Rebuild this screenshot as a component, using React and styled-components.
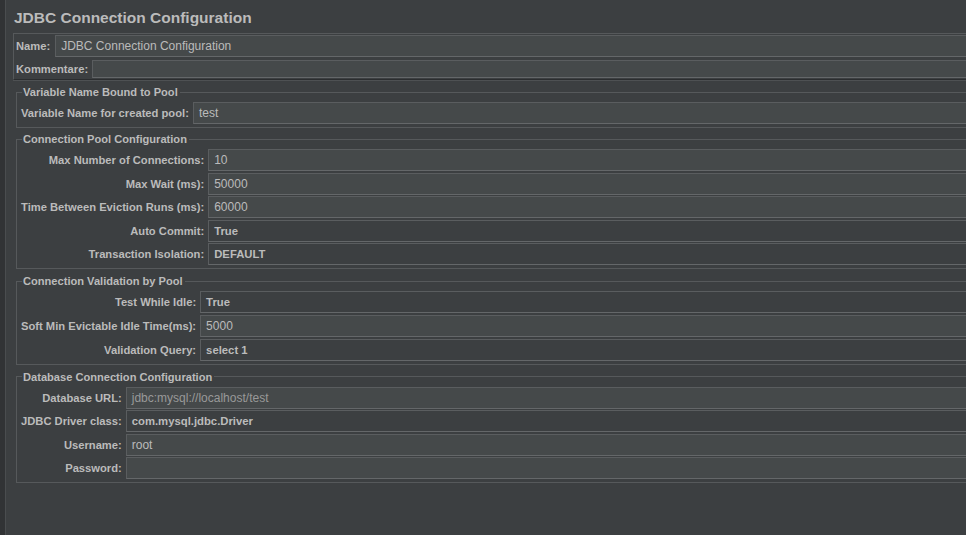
import React from "react";
import styled, { createGlobalStyle } from "styled-components";

const Global = createGlobalStyle`
  html, body { margin: 0; padding: 0; background: #3c3f41; }
  body { overflow: hidden; font-family: "Liberation Sans", Arial, sans-serif; }
  * { box-sizing: border-box; }
`;

const Screen = styled.div`
  width: 966px;
  height: 535px;
  display: flex;
  overflow: hidden;
  background: #3c3f41;
`;

const SideStrip = styled.div`
  width: 6px;
  flex: none;
  background: #313335;
  border-right: 1px solid #4a4d4f;
`;

const Main = styled.div`
  flex: none;
  width: 1000px;
  padding-left: 7px;
  display: flex;
  flex-direction: column;
`;

const Title = styled.h1`
  margin: 0;
  height: 33px;
  padding-left: 1px;
  font-size: 15.5px;
  font-weight: bold;
  line-height: 36px;
  color: #bbbbbb;
`;

const NamePanel = styled.div`
  border: 1px solid #56595b;
  border-bottom-color: #2b2d2f;
  box-shadow: 0 1px 0 #4e5153;
  padding: 1px 0 1px 2px;
  display: flex;
  flex-direction: column;
  gap: 3px;
`;

const NameRow = styled.div`
  display: flex;
  align-items: center;
  gap: ${(p) => p.$gap || 4}px;
`;

const Label = styled.label`
  font-size: 11.2px;
  font-weight: bold;
  color: #bbbbbb;
  text-align: right;
  white-space: nowrap;
`;

const Field = styled.div`
  flex: 1;
  height: ${(p) => p.$h || 22}px;
  padding-left: 5px;
  display: flex;
  align-items: center;
  font-size: ${(p) => (p.$combo ? 11.3 : 12)}px;
  white-space: nowrap;
  font-weight: ${(p) => (p.$combo ? "bold" : "normal")};
  color: ${(p) => p.$color || "#bbbbbb"};
  background: ${(p) => (p.$combo ? "#3c3f41" : "#45494a")};
  border: 1px solid #5a5d5f;
  border-bottom-color: #646769;
  border-right: none;
`;

const Group = styled.fieldset`
  margin: ${(p) => p.$mt}px 0 0 3px;
  padding: 3px 0 3px 4px;
  border: 1px solid #56595b;
  border-right: none;
  display: grid;
  grid-template-columns: max-content 1fr;
  column-gap: 4px;
  row-gap: 1.6px;
  align-items: center;
`;

const Legend = styled.legend`
  margin-left: 1px;
  padding: 0 2px 0 1px;
  font-size: 11.1px;
  font-weight: bold;
  line-height: 14px;
  color: #bbbbbb;
`;

const groups = [
  {
    title: "Variable Name Bound to Pool",
    mt: 5,
    rows: [["Variable Name for created pool:", "test"]],
  },
  {
    title: "Connection Pool Configuration",
    mt: 4,
    rows: [
      ["Max Number of Connections:", "10"],
      ["Max Wait (ms):", "50000"],
      ["Time Between Eviction Runs (ms):", "60000"],
      ["Auto Commit:", "True", true],
      ["Transaction Isolation:", "DEFAULT", true],
    ],
  },
  {
    title: "Connection Validation by Pool",
    mt: 5,
    rows: [
      ["Test While Idle:", "True", true],
      ["Soft Min Evictable Idle Time(ms):", "5000"],
      ["Validation Query:", "select 1", true],
    ],
  },
  {
    title: "Database Connection Configuration",
    mt: 5,
    rows: [
      ["Database URL:", "jdbc:mysql://localhost/test", false, "#999999"],
      ["JDBC Driver class:", "com.mysql.jdbc.Driver", true],
      ["Username:", "root"],
      ["Password:", ""],
    ],
  },
];

export default function App() {
  return (
    <>
      <Global />
      <Screen>
        <SideStrip />
        <Main>
          <Title>JDBC Connection Configuration</Title>
          <NamePanel>
            <NameRow $gap={5}>
              <Label>Name:</Label>
              <Field>JDBC Connection Configuration</Field>
            </NameRow>
            <NameRow>
              <Label>Kommentare:</Label>
              <Field $h={18} />
            </NameRow>
          </NamePanel>
          {groups.map((g) => (
            <Group key={g.title} $mt={g.mt}>
              <Legend>{g.title}</Legend>
              {g.rows.map(([label, value, combo, color]) => (
                <React.Fragment key={label}>
                  <Label>{label}</Label>
                  <Field $combo={combo} $color={color}>
                    {value}
                  </Field>
                </React.Fragment>
              ))}
            </Group>
          ))}
        </Main>
      </Screen>
    </>
  );
}
